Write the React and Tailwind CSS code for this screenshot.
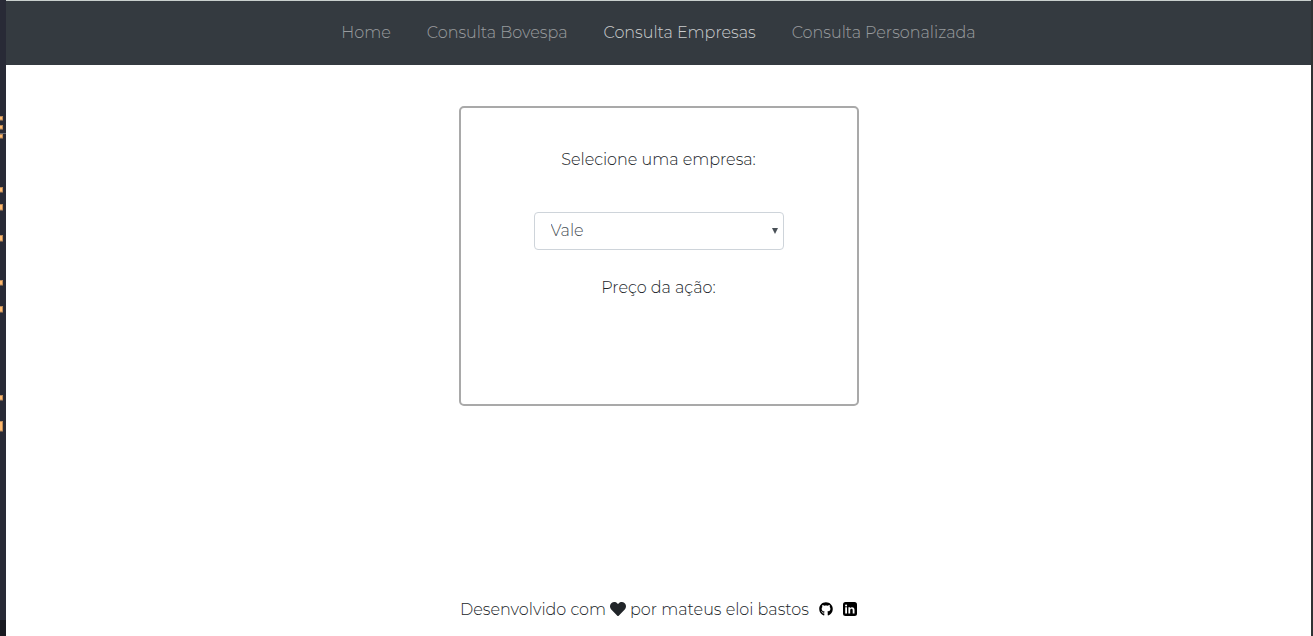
import { useState } from "react";
import { FaGithub, FaHeart } from "react-icons/fa";

const links = ["Home", "Consulta Bovespa", "Consulta Empresas", "Consulta Personalizada"];

const marks = [
  [116, 4],
  [125, 4],
  [134, 4],
  [187, 5],
  [204, 6],
  [235, 6],
  [280, 5],
  [306, 6],
  [395, 5],
  [421, 10],
];

function EditorEdge() {
  return (
    <div aria-hidden="true" className="flex w-1.5 shrink-0 flex-col bg-[#282a36]">
      <svg className="w-1.5 flex-1" fill="none">
        <path d="M0 133.500h6" stroke="#6b6d75" />
        {marks.map(([y, h]) => (
          <rect key={y} x="-1" y={y + 0.5} width="3.500" height={h - 0.5} fill="#ffb86c" stroke="#b98a5a" />
        ))}
      </svg>
      <div className="h-4 bg-[#191a21]" />
    </div>
  );
}

function LinkedInLogo() {
  return (
    <svg viewBox="0 0 14 14" className="size-3.5" aria-hidden="true">
      <rect width="14" height="14" rx="2.500" fill="currentColor" />
      <path
        fill="#fff"
        d="M2.200 5.300h1.800v6.200H2.200zM3.100 2.400a1.050 1.050 0 1 1 0 2.100 1.050 1.050 0 0 1 0-2.100zM5.400 5.300h1.700v.85c.35-.6 1-1 1.900-1 1.900 0 2.500 1.150 2.500 2.900v3.450H9.700V8.400c0-.9-.2-1.600-1.150-1.600-1 0-1.350.7-1.350 1.600v3.100H5.400z"
      />
    </svg>
  );
}

export default function App() {
  const [company, setCompany] = useState("Vale");

  return (
    <div className="flex min-h-screen font-['Montserrat','Inter',sans-serif] text-[16px] leading-6 font-light text-[#212529]">
      <EditorEdge />
      <div className="flex min-w-0 flex-1 flex-col bg-white">
        <header className="border-t border-[#c9cfcd] bg-[#343a40] py-5">
          <nav className="flex flex-wrap justify-center gap-9">
            {links.map((label) => (
              <a
                key={label}
                href="#"
                aria-current={label === "Consulta Empresas" ? "page" : undefined}
                className={label === "Consulta Empresas" ? "text-white/75" : "text-white/50"}
              >
                {label}
              </a>
            ))}
          </nav>
        </header>

        <main className="flex flex-1 flex-col items-center px-4 pt-[41px]">
          <section className="flex min-h-[300px] w-full max-w-[400px] flex-col items-center rounded-[5px] border-2 border-[#a9a9a9] pt-10">
            <label htmlFor="company">Selecione uma empresa:</label>
            <div className="relative mt-10 w-[250px]">
              <select
                id="company"
                value={company}
                onChange={(e) => setCompany(e.target.value)}
                className="h-[38px] w-full appearance-none rounded border border-[#ced4da] bg-white px-4 text-[#495057]"
              >
                <option>Vale</option>
                <option>Petrobras</option>
                <option>Ambev</option>
              </select>
              <svg viewBox="0 0 6 6" className="pointer-events-none absolute top-4 right-1.5 size-1.5 fill-[#495057]">
                <path d="M0 0h6L3 6z" />
              </svg>
            </div>
            <p className="mt-[26px]">Preço da ação:</p>
          </section>
        </main>

        <footer className="flex items-center justify-center px-4 pb-3.5">
          <span>Desenvolvido com</span>
          <FaHeart className="mx-1 mb-0.5 size-4" />
          <span>por mateus eloi bastos</span>
          <a href="#" aria-label="GitHub" className="mb-0.5 ml-2.5 text-black">
            <FaGithub className="size-3.5" />
          </a>
          <a href="#" aria-label="LinkedIn" className="mb-0.5 ml-2.5 text-black">
            <LinkedInLogo />
          </a>
        </footer>
      </div>
      <div aria-hidden="true" className="w-0.5 shrink-0 bg-[#303233]" />
    </div>
  );
}
